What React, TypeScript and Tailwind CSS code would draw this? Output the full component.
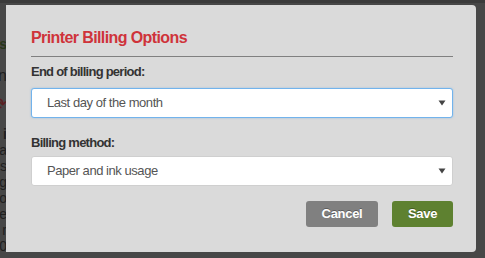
import React from "react";

function Caret() {
  return (
    <svg width="8" height="6" viewBox="0 0 8 6" className="shrink-0">
      <path d="M0.5 0.5 L7.5 0.5 L4 5.5 Z" fill="#444" />
    </svg>
  );
}

function SelectBox({ value, focused }: { value: string; focused?: boolean }) {
  return (
    <div
      className={
        "mt-[8px] h-[30px] flex items-center justify-between bg-white rounded-[3px] pl-[15px] pr-[6px] text-[13px] leading-[16px] tracking-[-0.45px] text-[#555] border " +
        (focused
          ? "border-[#72b3ec] shadow-[0_0_2px_rgba(102,175,233,0.6)]"
          : "border-[#cfcfcf]")
      }
    >
      <span>{value}</span>
      <Caret />
    </div>
  );
}

export default function App() {
  return (
    <div className="relative w-[485px] h-[258px] overflow-hidden bg-[#474747] font-['Liberation_Sans',Arial,sans-serif]">
      {/* dimmed page behind the dialog */}
      <div className="flex flex-col h-full border-t-[3px] border-[#3b3b3b]">
        <div className="flex flex-col w-[7px] items-end text-[#1f1f1f] text-[14px] leading-[16px] font-bold whitespace-nowrap">
          <div className="mt-[33px] text-[#27361a]">Status</div>
          <div className="mt-[16px] font-normal text-[16px]">Printn</div>
          <div className="mt-[12px] text-[#5a1f22] text-[18px] font-normal">⟳</div>
          <div className="mt-[14px]">Printer i</div>
          <div className="font-normal">Model: Ha</div>
          <div className="font-normal">Status: Os</div>
          <div className="font-normal">Usage: Ig</div>
          <div className="font-normal">Location: o</div>
          <div className="font-normal">Paper: e</div>
          <div className="font-normal">Counter: r</div>
          <div className="font-normal">Firmware: 1.20</div>
        </div>
      </div>

      {/* overlay layer */}
      <div className="absolute inset-0 pl-[6px] pt-[5px]">
        <div className="w-[470px] h-[247px] bg-[#dadada] rounded-tr-[4px] rounded-br-[4px] pl-[25px] pr-[23px] pt-[23px] flex flex-col">
          <div className="text-[16px] leading-[20px] tracking-[-0.6px] font-bold text-[#cf333a] pb-[8px] border-b border-[#808080]">
            Printer Billing Options
          </div>
          <div className="mt-[7px] text-[13px] leading-[16px] tracking-[-0.75px] font-bold text-[#333]">
            End of billing period:
          </div>
          <SelectBox value="Last day of the month" focused />
          <div className="mt-[17px] text-[13px] leading-[16px] tracking-[-0.75px] font-bold text-[#333]">
            Billing method:
          </div>
          <div className="-mt-[3px]">
            <SelectBox value="Paper and ink usage" />
          </div>
          <div className="mt-[15px] flex justify-end gap-[14px]">
            <button className="w-[72px] h-[26px] rounded-[3px] bg-[#808080] text-white text-[13px] tracking-[-0.3px] font-bold [text-shadow:0_-1px_0_rgba(0,0,0,0.3)]">
              Cancel
            </button>
            <button className="w-[61px] h-[26px] rounded-[3px] bg-[#5e8130] text-white text-[13px] tracking-[-0.3px] font-bold [text-shadow:0_-1px_0_rgba(0,0,0,0.3)]">
              Save
            </button>
          </div>
        </div>
      </div>
    </div>
  );
}
